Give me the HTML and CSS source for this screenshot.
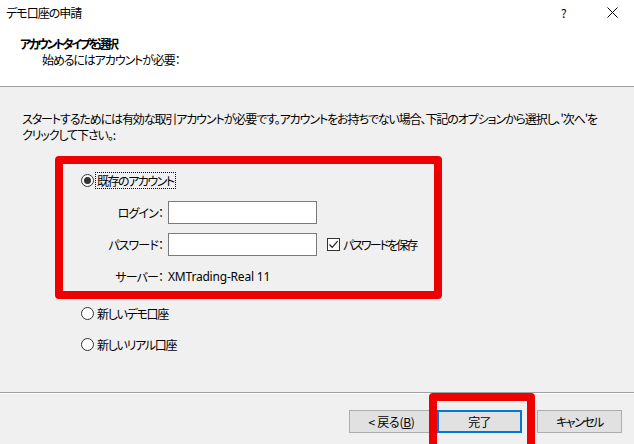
FILE: index.html
```html
<!DOCTYPE html>
<html lang="ja">
<head>
<meta charset="utf-8">
<title>デモ口座の申請</title>
<link rel="stylesheet" href="styles.css">
</head>
<body>
<div class="dialog">
  <header class="header">
    <div class="titlebar">
      <span class="title">デモ口座の申請</span>
      <span class="help">?</span>
      <span class="close">
        <svg width="11" height="11" viewBox="0 0 11 11"><path d="M0.5 0.5 L10.5 10.5 M10.5 0.5 L0.5 10.5" stroke="#000" stroke-width="1" fill="none"/></svg>
      </span>
    </div>
    <div class="heading">アカウントタイプを選択</div>
    <div class="subheading">始めるにはアカウントが必要：</div>
  </header>

  <main class="content">
    <p class="intro">スタートするためには有効な取引アカウントが必要です。アカウントをお持ちでない場合、下記のオプションから選択し、'次へ'を<br>クリックして下さい。:</p>

    <section class="highlight">
      <div class="radio-row">
        <span class="radio checked"></span>
        <span class="label focus">既存のアカウント</span>
      </div>
      <div class="form">
        <span class="field-label">ログイン：</span>
        <span class="input"></span>
        <span></span>
        <span class="field-label">パスワード：</span>
        <span class="input"></span>
        <span class="check-wrap">
          <span class="checkbox">
            <svg width="11" height="11" viewBox="0 0 11 11"><path d="M1.5 5.5 L4.2 8.3 L9.6 2.2" stroke="#222" stroke-width="1.2" fill="none"/></svg>
          </span>
          <span class="check-label">パスワードを保存</span>
        </span>
        <span class="field-label">サーバー：</span>
        <span class="server">XMTrading-Real 11</span>
        <span></span>
      </div>
    </section>

    <div class="options">
      <div class="radio-row">
        <span class="radio"></span>
        <span class="label">新しいデモ口座</span>
      </div>
      <div class="radio-row">
        <span class="radio"></span>
        <span class="label">新しいリアル口座</span>
      </div>
    </div>
  </main>

  <footer class="footer">
    <span class="btn back">&lt; 戻る(<u>B</u>)</span>
    <span class="btn primary">完了
      <span class="annot"></span>
    </span>
    <span class="btn cancel">キャンセル</span>
  </footer>
</div>
</body>
</html>
```
FILE: styles.css
```css
* { box-sizing: border-box; }
html, body {
  margin: 0;
  padding: 0;
}
body {
  width: 634px;
  height: 444px;
  overflow: hidden;
  background: #f0f0f0;
  font-family: "Noto Sans CJK JP", "Noto Sans", sans-serif;
  font-size: 12px;
  font-feature-settings: "palt";
  letter-spacing: -0.8px;
  color: #000;
}
.dialog {
  display: flex;
  flex-direction: column;
  width: 634px;
  height: 444px;
}
.header {
  background: #fff;
  height: 87px;
  border-bottom: 1px solid #a0a0a0;
  display: flex;
  flex-direction: column;
  flex: none;
}
.titlebar {
  height: 25px;
  display: flex;
  align-items: center;
  padding-left: 6px;
}
.title {
  flex: 1;
  line-height: 16px;
  letter-spacing: -1px;
}
.help {
  width: 10px;
  margin-right: 36px;
  font-size: 12px;
  line-height: 16px;
  letter-spacing: 0;
}
.close {
  display: flex;
  width: 11px;
  height: 11px;
  margin-right: 16px;
  margin-top: -1px;
}
.heading {
  margin-top: 11px;
  padding-left: 20px;
  font-weight: bold;
  line-height: 16px;
  letter-spacing: -2.4px;
}
.subheading {
  padding-left: 42px;
  line-height: 16px;
  letter-spacing: -1.1px;
}
.content {
  flex: 1;
  display: flex;
  flex-direction: column;
}
.intro {
  margin: 24px 0 0 0;
  padding-left: 22px;
  line-height: 16px;
  white-space: nowrap;
  letter-spacing: -1.1px;
}
.highlight {
  margin: 13px 0 0 55px;
  width: 387px;
  height: 143px;
  border: 8px solid #ee0000;
  border-radius: 4px;
  padding: 8px 0 0 18px;
  display: flex;
  flex-direction: column;
}
.radio-row {
  display: flex;
  align-items: center;
  height: 16px;
  line-height: 16px;
}
.radio {
  width: 13px;
  height: 13px;
  border: 1px solid #333;
  border-radius: 50%;
  background: #fff;
  display: flex;
  align-items: center;
  justify-content: center;
  flex: none;
}
.radio.checked::after {
  content: "";
  width: 7px;
  height: 7px;
  border-radius: 50%;
  background: #333;
}
.label {
  margin-left: 1px;
  padding: 0 1px;
  line-height: 15px;
  border: 1px solid transparent;
  letter-spacing: -1.3px;
}
.label.focus {
  border: 1px dotted #000;
  letter-spacing: -1.5px;
}
.form {
  margin-top: 13px;
  margin-left: -18px;
  display: grid;
  grid-template-columns: 100px 149px 110px;
  column-gap: 5px;
  row-gap: 9px;
  grid-auto-rows: 23px;
  align-items: center;
}
.field-label {
  text-align: right;
  line-height: 16px;
  letter-spacing: -0.9px;
}
.input {
  height: 23px;
  background: #fff;
  border: 1px solid #7a7a7a;
}
.server {
  line-height: 16px;
  font-family: "Noto Sans", sans-serif;
  letter-spacing: -0.2px;
}
.check-wrap {
  display: flex;
  align-items: center;
  margin-left: 5px;
}
.checkbox {
  width: 13px;
  height: 13px;
  border: 1px solid #333;
  background: #fff;
  display: flex;
  align-items: center;
  justify-content: center;
  flex: none;
}
.check-label {
  margin-left: 3px;
  line-height: 16px;
  letter-spacing: -2px;
  white-space: nowrap;
}
.options {
  margin-top: 6px;
  padding-left: 81px;
  display: flex;
  flex-direction: column;
  gap: 15px;
}
.footer {
  flex: none;
  height: 52px;
  border-top: 1px solid #a0a0a0;
  box-shadow: inset 0 1px 0 #fff;
  display: flex;
  justify-content: flex-end;
  align-items: flex-start;
  padding: 17px 12px 0 0;
}
.btn {
  width: 85px;
  height: 23px;
  background: #e1e1e1;
  border: 1px solid #adadad;
  display: flex;
  align-items: center;
  justify-content: center;
  line-height: 16px;
}
.btn.back { margin-right: 3px; letter-spacing: -0.3px; }
.btn.cancel { letter-spacing: -1.5px; }
.btn.primary {
  border: 2px solid #0078d7;
  margin-right: 15px;
  position: relative;
}
.annot {
  position: absolute;
  left: -10px;
  top: -19px;
  width: 106px;
  height: 64px;
  border: 8px solid #ee0000;
  border-radius: 4px;
}
```
